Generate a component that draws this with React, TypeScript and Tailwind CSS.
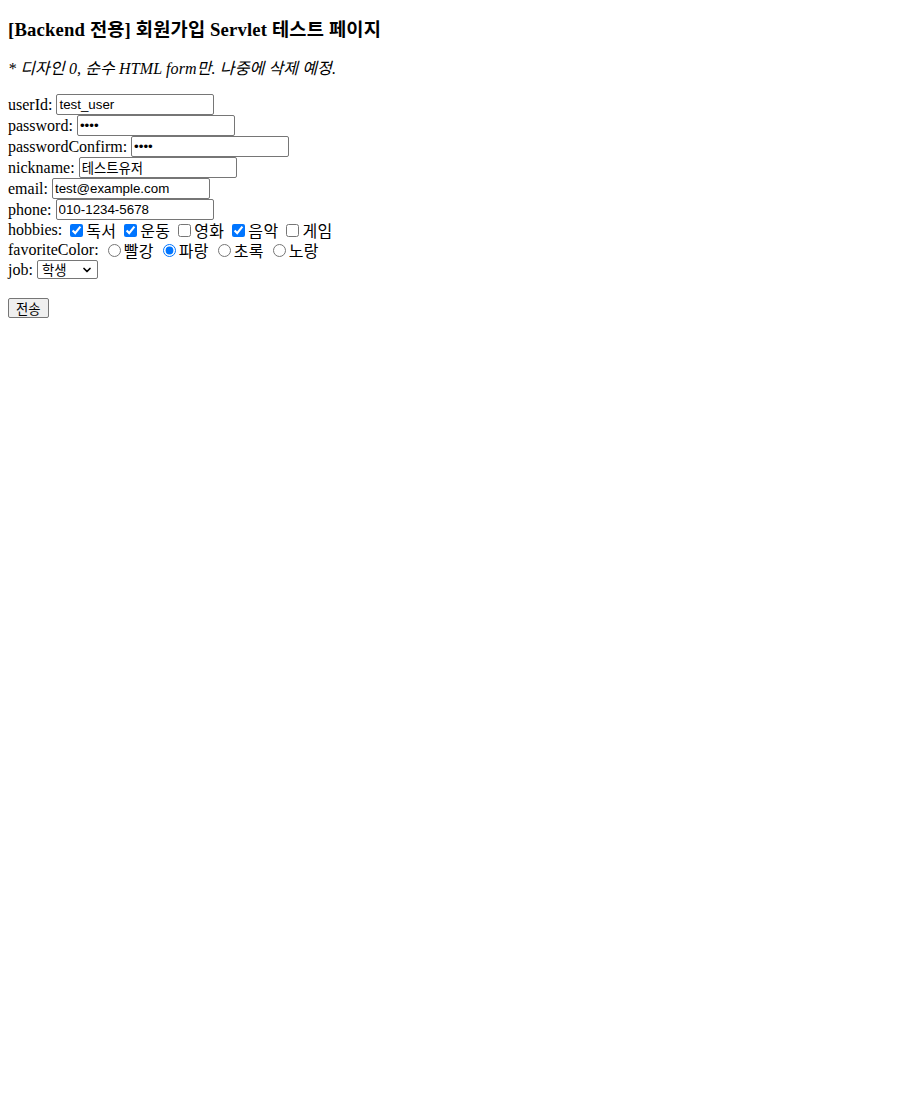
import { ChevronDown } from 'lucide-react'

const serif = "font-['Liberation_Serif','Noto_Sans_CJK_KR',serif]"
const field =
  "ml-1 w-[158px] h-[21px] border border-[#767676] rounded-[2px] bg-white px-[2px] py-[1px] text-[13.33px] text-black font-['Liberation_Sans','Noto_Sans_CJK_KR',sans-serif] outline-none"

const textRows = [
  { label: 'userId:', type: 'text', value: 'test_user' },
  { label: 'password:', type: 'password', value: 'abcd' },
  { label: 'passwordConfirm:', type: 'password', value: 'abcd' },
  { label: 'nickname:', type: 'text', value: '테스트유저' },
  { label: 'email:', type: 'email', value: 'test@example.com' },
  { label: 'phone:', type: 'text', value: '010-1234-5678' },
]

const hobbies = [
  { name: '독서', checked: true },
  { name: '운동', checked: true },
  { name: '영화', checked: false },
  { name: '음악', checked: true },
  { name: '게임', checked: false },
]

const colors = [
  { name: '빨강', checked: false },
  { name: '파랑', checked: true },
  { name: '초록', checked: false },
  { name: '노랑', checked: false },
]

export default function App() {
  return (
    <div className={`${serif} text-[16px] text-black bg-white min-h-[1100px] px-2 pt-[19px]`}>
      <h3 className="h-[22px] text-[18.72px] leading-[22px] font-bold tracking-[0.15px] whitespace-nowrap">
        [Backend 전용] 회원가입 Servlet 테스트 페이지
      </h3>
      <p className="mt-[19px] h-[18px] italic leading-[18px] tracking-[0.12px] whitespace-nowrap">
        * 디자인 0, 순수 HTML form만. 나중에 삭제 예정.
      </p>

      <form className="mt-4" onSubmit={(e) => e.preventDefault()}>
        {/* text fields */}
        {textRows.map((r) => (
          <div key={r.label} className="flex items-center h-[21px]">
            <span className="leading-[21px]">{r.label}</span>
            <input type={r.type} defaultValue={r.value} className={field} />
          </div>
        ))}

        {/* hobbies */}
        <div className="flex items-center h-[20px]">
          <span className="leading-[20px]">hobbies:</span>
          {hobbies.map((h) => (
            <label key={h.name} className="flex items-center ml-1">
              <input
                type="checkbox"
                defaultChecked={h.checked}
                className="w-[13px] h-[13px] ml-1 mr-[3px] accent-[#0075ff]"
              />
              <span className="font-['Noto_Sans_CJK_KR',sans-serif] text-[16px] leading-[20px] tracking-[0.3px]">
                {h.name}
              </span>
            </label>
          ))}
        </div>

        {/* favorite color */}
        <div className="flex items-center h-[20px]">
          <span className="leading-[20px]">favoriteColor:</span>
          {colors.map((c) => (
            <label key={c.name} className="flex items-center ml-1">
              <input
                type="radio"
                name="favoriteColor"
                defaultChecked={c.checked}
                className="w-[13px] h-[13px] ml-[5px] mr-[3px] accent-[#0075ff]"
              />
              <span className="font-['Noto_Sans_CJK_KR',sans-serif] text-[16px] leading-[20px] tracking-[0.3px]">
                {c.name}
              </span>
            </label>
          ))}
        </div>

        {/* job */}
        <div className="flex items-center h-[19px]">
          <span className="leading-[19px]">job:</span>
          <div className="relative flex ml-1 w-[61px] h-[19px]">
            <select
              defaultValue="student"
              className="block appearance-none w-full h-full border border-[#767676] rounded-[2px] bg-white pl-[4px] text-[13.33px] text-black font-['Noto_Sans_CJK_KR',sans-serif] leading-[17px] outline-none"
            >
              <option value="student">학생</option>
              <option value="worker">직장인</option>
              <option value="etc">기타</option>
            </select>
            <ChevronDown
              className="absolute right-[5px] top-[4px] w-[12px] h-[12px] pointer-events-none text-black"
              strokeWidth={3.5}
            />
          </div>
        </div>

        <div className="h-[19px]" />

        <div className="flex">
          <button
            type="submit"
            className="h-[20px] px-[7px] border border-[#767676] rounded-[2px] bg-[#efefef] text-[13.33px] leading-[17px] text-black font-['Noto_Sans_CJK_KR',sans-serif]"
          >
            전송
          </button>
        </div>
      </form>
    </div>
  )
}
